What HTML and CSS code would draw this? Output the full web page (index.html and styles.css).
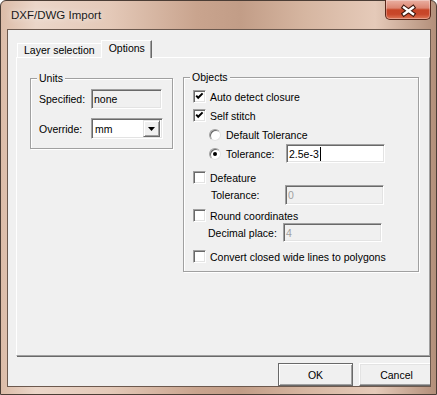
FILE: index.html
```html
<!DOCTYPE html>
<html lang="en">
<head>
    <meta charset="UTF-8">
    <title>DXF/DWG Import</title>
    <link rel="stylesheet" href="styles.css">
</head>
<body>
    <div class="window">
        <div class="titlebar">
            <span class="title">DXF/DWG Import</span>
            <div class="close-btn">
                <svg width="44" height="19" viewBox="0 0 44 19">
                    <path d="M18 7.5 L27 14 M27 7.5 L18 14" stroke="#3e170d" stroke-width="4.6" stroke-linecap="square" fill="none"/>
                    <path d="M18 7.5 L27 14 M27 7.5 L18 14" stroke="#fff" stroke-width="2.4" stroke-linecap="square" fill="none"/>
                </svg>
            </div>
        </div>

        <div class="client">
            <div class="tabs">
                <div class="tab">Layer selection</div>
                <div class="tab active">Options</div>
            </div>

            <div class="panel">
                <fieldset class="group units">
                    <legend>Units</legend>
                    <div class="unit-row">
                        <span class="unit-label">Specified:</span>
                        <span class="edit readonly">none</span>
                    </div>
                    <div class="unit-row">
                        <span class="unit-label">Override:</span>
                        <span class="combo">
                            <span class="combo-text">mm</span>
                            <span class="combo-btn">
                                <svg width="7" height="4" viewBox="0 0 7 4"><path d="M0 0 H7 L3.5 4 Z" fill="#000"/></svg>
                            </span>
                        </span>
                    </div>
                </fieldset>

                <fieldset class="group objects">
                    <legend>Objects</legend>
                    <div class="opt">
                        <span class="check"><svg width="9" height="9" viewBox="0 0 9 9"><path d="M1.2 3.6 L3.2 5.8 L7.6 1.4" stroke="#000" stroke-width="2" fill="none"/></svg></span>
                        Auto detect closure
                    </div>
                    <div class="opt">
                        <span class="check"><svg width="9" height="9" viewBox="0 0 9 9"><path d="M1.2 3.6 L3.2 5.8 L7.6 1.4" stroke="#000" stroke-width="2" fill="none"/></svg></span>
                        Self stitch
                    </div>
                    <div class="opt indent">
                        <span class="radio"></span>
                        Default Tolerance
                    </div>
                    <div class="opt indent">
                        <span class="radio on"></span>
                        <span class="opt-label tol">Tolerance:</span>
                        <span class="edit"><span class="caret">2.5e-3</span></span>
                    </div>
                    <div class="opt group-start">
                        <span class="check"></span>
                        Defeature
                    </div>
                    <div class="opt sub defeature-tol">
                        <span class="opt-label">Tolerance:</span>
                        <span class="edit disabled tall">0</span>
                    </div>
                    <div class="opt after-sub">
                        <span class="check"></span>
                        Round coordinates
                    </div>
                    <div class="opt sub decimal">
                        <span class="opt-label">Decimal place:</span>
                        <span class="edit disabled">4</span>
                    </div>
                    <div class="opt group-start">
                        <span class="check"></span>
                        Convert closed wide lines to polygons
                    </div>
                </fieldset>
            </div>

            <div class="buttons">
                <div class="btn default">OK</div>
                <div class="btn">Cancel</div>
            </div>
        </div>
    </div>
</body>
</html>
```

FILE: styles.css
```css
* {
    box-sizing: border-box;
}

body {
    margin: 0;
    font-family: "Liberation Sans", Arial, sans-serif;
    font-size: 10.5px;
    color: #000;
    background: #fff;
}

/* window frame */
.window {
    width: 437px;
    height: 395px;
    border: 1px solid #4b3d35;
    border-radius: 6px 6px 0 0;
    background: linear-gradient(90deg, #dcbca8 0%, #ebd6c9 8%, #e4c9b8 25%, #c9a48e 45%, #c29d87 55%, #d6b6a1 70%, #e5cab9 86%, #b38f7a 100%);
    padding: 0 5px 7px 6px;
    display: flex;
    flex-direction: column;
}

.titlebar {
    height: 28px;
    display: flex;
    align-items: flex-start;
}

.title {
    padding: 7px 0 0 4px;
    font-size: 11.5px;
    line-height: 14px;
    color: #1a1a1a;
    text-shadow: 0 0 6px rgba(255, 255, 255, 0.9);
}

.close-btn {
    margin-left: auto;
    margin-top: -1px;
    width: 46px;
    height: 20px;
    border: 1px solid #59281b;
    border-top: none;
    border-radius: 0 0 5px 5px;
    background: linear-gradient(#eab0a2 0%, #dc8672 42%, #c74527 52%, #c8472a 75%, #de7858 100%);
    box-shadow: inset 0 0 0 1px rgba(255, 255, 255, 0.3);
}

.close-btn svg {
    display: block;
}

/* dialog client area */
.client {
    flex: 1;
    border: 1px solid #6c594e;
    background: #f0f0f0;
    padding: 10px 0 0 8px;
    overflow: hidden;
    display: flex;
    flex-direction: column;
}

.tabs {
    display: flex;
    align-items: flex-end;
    height: 17px;
    padding-left: 1px;
}

.tab {
    height: 14px;
    padding: 0 6px;
    line-height: 13px;
    border: 1px solid #a0a0a0;
    border-color: #fff #a0a0a0 transparent #fff;
    border-bottom: none;
}

.tab.active {
    height: 18px;
    margin-left: -1px;
    margin-bottom: -1px;
    padding: 1px 6px 0 7px;
    position: relative;
    z-index: 1;
    background: #f0f0f0;
    border-right-color: #696969;
    box-shadow: inset -1px 0 0 #a0a0a0;
}

.panel {
    height: 303px;
    border-top: 1px solid #fff;
    border-left: 1px solid #fff;
    border-right: 1px solid #a0a0a0;
    border-bottom: 1px solid #a0a0a0;
    box-shadow: 1px 1px 0 #696969;
    padding: 13px 0 0 13px;
    display: flex;
    align-items: flex-start;
    gap: 10px;
}

/* group boxes */
.group {
    margin: 0;
    min-width: 0;
    border: 1px solid #a0a0a0;
    box-shadow: inset 1px 1px 0 #fff, 1px 1px 0 #fff;
}

.group legend {
    padding: 0 2px;
    margin-left: -2px;
    line-height: 13px;
    background: #f0f0f0;
}

.units {
    width: 143px;
    margin-top: 1px;
    padding: 4px 8px 9px 8px;
}

.objects {
    width: 236px;
    padding: 3px 8px 5px 9px;
}

.objects legend {
    margin-left: -3px;
}

.unit-row {
    display: flex;
    align-items: center;
}

.unit-row + .unit-row {
    margin-top: 9px;
}

.unit-label {
    width: 52px;
}

/* edit boxes */
.edit {
    display: flex;
    align-items: center;
    width: 99px;
    height: 19px;
    padding-left: 2px;
    background: #fff;
    border: 1px solid;
    border-color: #a0a0a0 #fff #fff #a0a0a0;
    box-shadow: inset 1px 1px 0 #696969, inset -1px -1px 0 #e3e3e3;
}

.edit.readonly {
    width: 71px;
    height: 20px;
    background: #f0f0f0;
}

.edit.disabled {
    background: #f0f0f0;
    color: #a0a0a0;
}

.edit.tall {
    height: 20px;
}

.caret {
    border-right: 1px solid #000;
    padding-right: 1px;
    line-height: 14px;
}

.combo {
    display: flex;
    align-items: center;
    width: 72px;
    height: 21px;
    padding: 2px;
    background: #fff;
    border: 1px solid;
    border-color: #a0a0a0 #fff #fff #a0a0a0;
    box-shadow: inset 1px 1px 0 #696969, inset -1px -1px 0 #e3e3e3;
}

.combo-text {
    flex: 1;
    padding-left: 1px;
}

.combo-btn {
    width: 17px;
    height: 17px;
    display: flex;
    align-items: center;
    justify-content: center;
    background: #f0f0f0;
    border: 1px solid;
    border-color: #e3e3e3 #696969 #696969 #e3e3e3;
    box-shadow: inset 1px 1px 0 #fff, inset -1px -1px 0 #a0a0a0;
}

.combo-btn svg {
    display: block;
}

/* option rows */
.opt {
    display: flex;
    align-items: center;
    height: 19px;
    white-space: nowrap;
}

.opt.indent {
    padding-left: 16px;
}

.opt.group-start {
    margin-top: 5px;
}

.opt.sub {
    margin-top: -2px;
}

.opt.after-sub {
    margin-top: 2px;
}

.defeature-tol {
    padding-left: 18px;
}

.defeature-tol .opt-label {
    width: 74px;
}

.decimal {
    padding-left: 15px;
}

.decimal .opt-label {
    width: 75px;
}

.opt-label.tol {
    width: 60px;
}

.check {
    flex: none;
    width: 13px;
    height: 13px;
    margin-right: 4px;
    padding: 1px;
    background: #fff;
    border: 1px solid;
    border-color: #a0a0a0 #fff #fff #a0a0a0;
    box-shadow: inset 1px 1px 0 #696969, inset -1px -1px 0 #e3e3e3;
}

.check svg {
    display: block;
}

.radio {
    flex: none;
    position: relative;
    width: 12px;
    height: 12px;
    margin-right: 5px;
    border-radius: 50%;
    background: #fff;
    border: 1px solid;
    border-color: #a0a0a0 #e3e3e3 #e3e3e3 #a0a0a0;
    box-shadow: inset 1px 1px 0 #696969;
}

.radio.on::after {
    content: "";
    position: absolute;
    left: 3px;
    top: 3px;
    width: 4px;
    height: 4px;
    border-radius: 50%;
    background: #000;
}

/* dialog buttons */
.buttons {
    display: flex;
    justify-content: flex-end;
    gap: 6px;
    margin-top: 7px;
    margin-right: -4px;
}

.btn {
    flex: none;
    width: 75px;
    height: 23px;
    display: flex;
    align-items: center;
    justify-content: center;
    background: #f0f0f0;
    border: 1px solid;
    border-color: #fff #696969 #696969 #fff;
    box-shadow: inset -1px -1px 0 #a0a0a0, inset 1px 1px 0 #e3e3e3;
}

.btn.default {
    border-color: #696969;
    box-shadow: inset 1px 1px 0 #fff, inset -1px -1px 0 #a0a0a0;
}
```
